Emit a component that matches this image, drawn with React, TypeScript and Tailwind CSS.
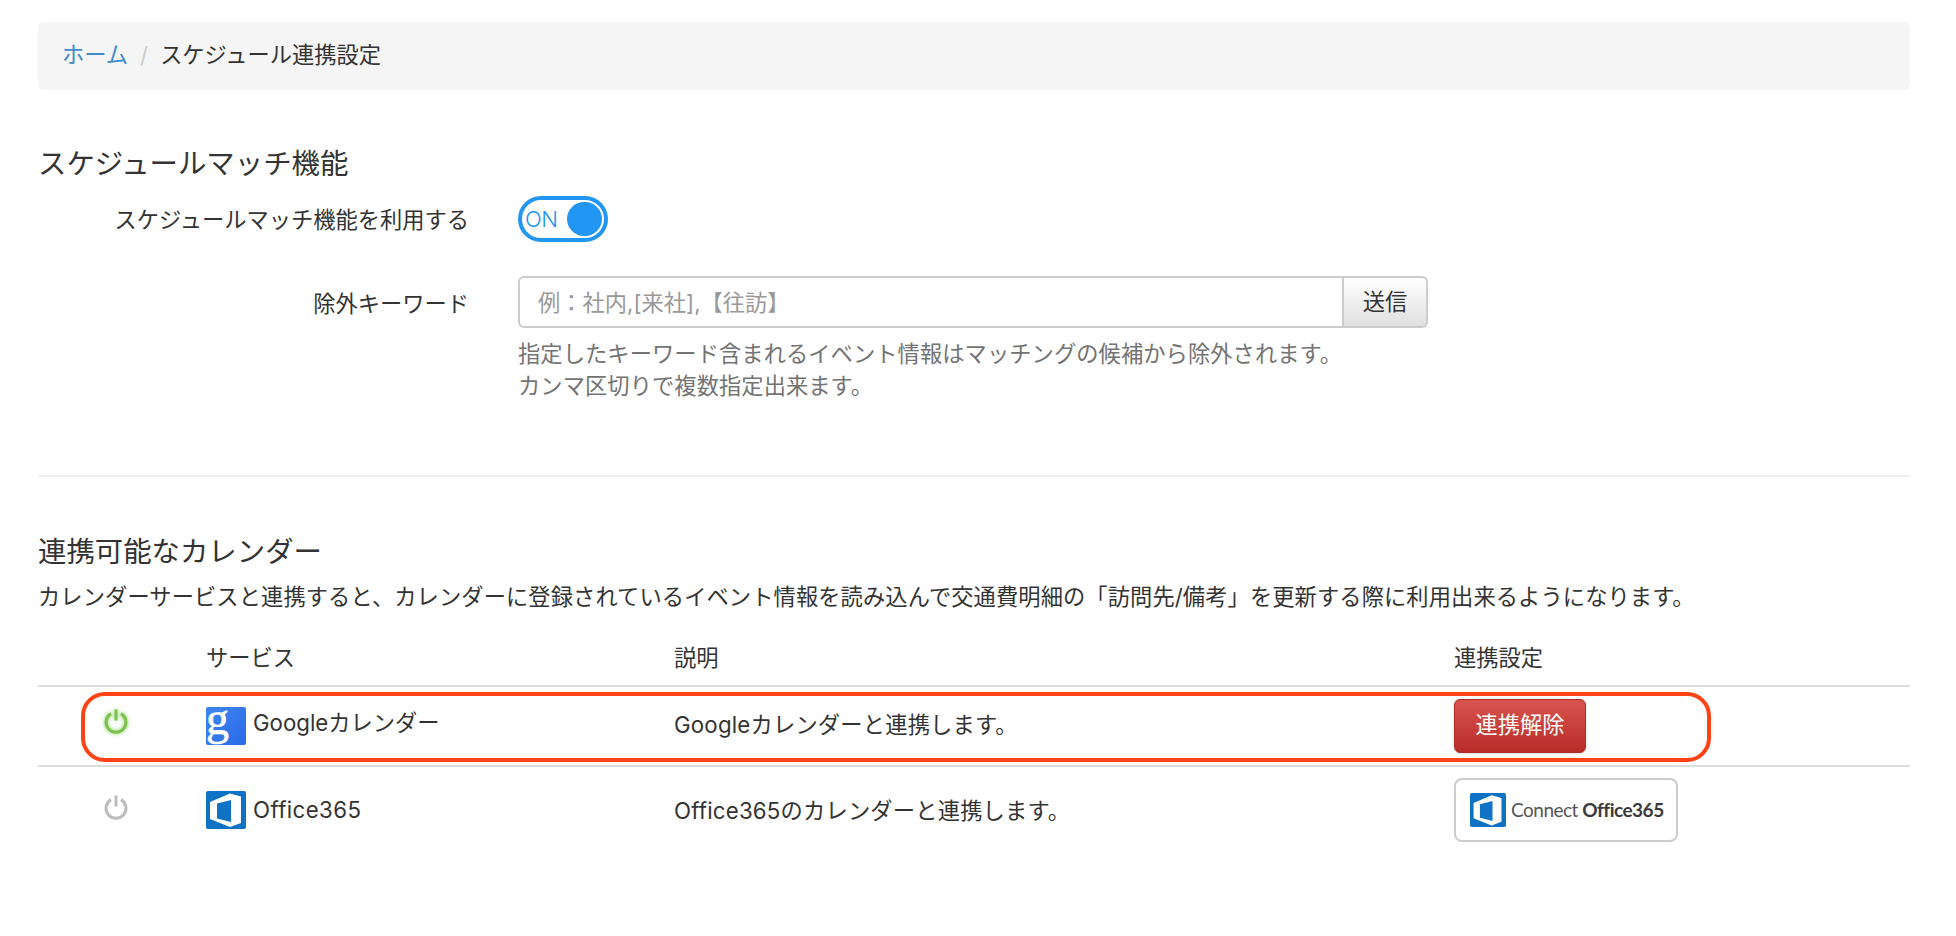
import React from 'react';

const font = "font-['Inter','Noto_Sans_CJK_JP',sans-serif]";

function PowerIcon({ color, glow }: { color: string; glow?: boolean }) {
  return (
    <svg
      width="26"
      height="26"
      viewBox="0 0 26 26"
      fill="none"
      style={glow ? { filter: 'drop-shadow(0 0 2px #8fd16a)' } : undefined}
    >
      <path d="M8 5.6a10 10 0 1 0 10 0" stroke={color} strokeWidth="3" />
      <path d="M13 1.5v11" stroke={color} strokeWidth="3" />
    </svg>
  );
}

function GoogleLogo() {
  return (
    <svg width="40" height="38" viewBox="0 0 40 38" className="rounded-[2px]">
      <defs>
        <linearGradient id="g-bg" x1="0" y1="0" x2="1" y2="1">
          <stop offset="0" stopColor="#3f86f0" />
          <stop offset="1" stopColor="#2a6ae8" />
        </linearGradient>
      </defs>
      <rect width="40" height="38" fill="url(#g-bg)" />
      <text x="0" y="27" fontFamily="Liberation Serif" fontSize="46" fill="#fff" stroke="#fff" strokeWidth="0.6">
        g
      </text>
    </svg>
  );
}

function OfficeLogo({ size = 40 }: { size?: number }) {
  return (
    <svg width={size} height={size * 0.95} viewBox="0 0 40 38" className="rounded-[2px]">
      <rect width="40" height="38" fill="#0f72c4" />
      <path
        fillRule="evenodd"
        fill="#fff"
        d="M4 11 24 2.5 35 5.5V32L24 36 4 28ZM11 12.5 25 9V31L11 27.5Z"
      />
    </svg>
  );
}

export default function App() {
  return (
    <div className={`${font} w-[1956px] h-[936px] bg-white text-[#333] text-[22.25px] px-[38px] pt-[22px] relative overflow-hidden`}>
      {/* Breadcrumb */}
      <div className="flex items-center h-[68px] w-[1872px] bg-[#f5f5f5] rounded-[6px] px-[24px] pb-[3px]">
        <a className="text-[#428bca]">ホーム</a>
        <span className="text-[#ccc] mx-[12px]">/</span>
        <span>スケジュール連携設定</span>
      </div>

      <h2 className="text-[28.4px] leading-[40px] mt-[54px]">スケジュールマッチ機能</h2>

      <div className="flex items-center h-[46px] mt-[12px]">
        <label className="w-[431px] text-right pt-[2px]">スケジュールマッチ機能を利用する</label>
        <div className="ml-[49px] flex items-center justify-between w-[90px] h-[46px] border-[4px] border-[#2196f3] rounded-[23px] pl-[3px] pr-[2px] text-[#2196f3] text-[22px] font-light tracking-tight">
          <span>ON</span>
          <span className="w-[35px] h-[34px] rounded-full bg-[#2196f3]"></span>
        </div>
      </div>

      <div className="flex items-center h-[52px] mt-[34px]">
        <label className="w-[431px] text-right pt-[4px]">除外キーワード</label>
        <div className="ml-[49px] flex h-[52px]">
          <input
            placeholder="例：社内,[来社],【往訪】"
            className="w-[826px] h-full border-[2px] border-[#ccc] rounded-l-[6px] pl-[18px] pt-[1px] outline-none placeholder:text-[#999]"
          />
          <button className="w-[84px] h-full border-[2px] border-l-0 border-[#ccc] rounded-r-[6px] bg-gradient-to-b from-white to-[#e0e0e0]">
            送信
          </button>
        </div>
      </div>

      <div className="ml-[480px] mt-[10px] text-[#737373] leading-[32px] tracking-[0.08px]">
        <p>指定したキーワード含まれるイベント情報はマッチングの候補から除外されます。</p>
        <p>カンマ区切りで複数指定出来ます。</p>
      </div>

      <hr className="w-[1872px] mt-[73px] border-0 border-t-[2px] border-[#eee]" />

      <h2 className="text-[28.4px] leading-[40px] mt-[55px]">連携可能なカレンダー</h2>
      <p className="leading-[32px] mt-[9px] whitespace-nowrap tracking-[0.1px]">
        カレンダーサービスと連携すると、カレンダーに登録されているイベント情報を読み込んで交通費明細の「訪問先/備考」を更新する際に利用出来るようになります。
      </p>

      {/* Calendar table */}
      <div className="w-[1872px] mt-[28px]">
        <div className="grid grid-cols-[168px_468px_780px_1fr] items-center h-[46px] border-b-[2px] border-[#ddd] pb-[16px]">
          <span></span>
          <span>サービス</span>
          <span>説明</span>
          <span>連携設定</span>
        </div>
        <div className="grid grid-cols-[168px_468px_780px_1fr] items-center h-[80px] border-b-[2px] border-[#ddd]">
          <span className="pl-[65px] -mt-[10px]">
            <PowerIcon color="#7cc24e" glow />
          </span>
          <span className="flex items-center gap-[7px]">
            <GoogleLogo />
            <span className="-mt-[6px]">Googleカレンダー</span>
          </span>
          <span className="-mt-[3px] tracking-[0.2px]">Googleカレンダーと連携します。</span>
          <button className="w-[132px] h-[54px] rounded-[6px] border border-[#b02a26] bg-gradient-to-b from-[#d9534f] to-[#b92c28] text-white shadow-sm pb-[3px]">
            連携解除
          </button>
        </div>
        <div className="grid grid-cols-[168px_468px_780px_1fr] items-center h-[90px]">
          <span className="pl-[65px] -mt-[10px]">
            <PowerIcon color="#bdbdbd" />
          </span>
          <span className="flex items-center gap-[7px] -mt-[4px]">
            <OfficeLogo />
            <span className="tracking-[0.4px]">Office365</span>
          </span>
          <span className="-mt-[3px] tracking-[0.2px]">Office365のカレンダーと連携します。</span>
          <button className="flex items-center w-[224px] h-[64px] rounded-[8px] border-[2px] border-[#ccc] bg-white pl-[14px] gap-[5px] -mt-[4px] font-['Lato',sans-serif] text-[19px] text-[#555]">
            <OfficeLogo size={36} />
            <span className="whitespace-nowrap tracking-[-0.5px]">
              Connect <b className="text-[#3a3a3a]">Office365</b>
            </span>
          </button>
        </div>
      </div>

      {/* Annotation highlighting the connected row */}
      <div className="absolute left-[81px] top-[692px] w-[1630px] h-[70px] border-[4px] border-[#ff4314] rounded-[24px] pointer-events-none"></div>
    </div>
  );
}
